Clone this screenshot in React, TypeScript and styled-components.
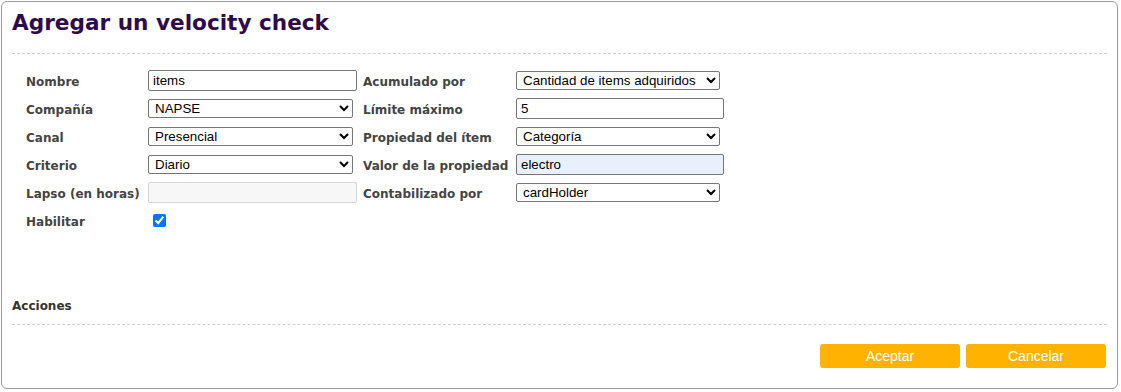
import React from "react";
import styled, { createGlobalStyle } from "styled-components";

const Global = createGlobalStyle`
  html, body { margin: 0; padding: 0; background: #fff; }
  body { font-family: "Liberation Sans", Arial, sans-serif; }
`;

const Panel = styled.div`
  margin: 1px 0 0 1px;
  width: 1117px;
  box-sizing: border-box;
  border: 1px solid #9a9a9a;
  border-radius: 6px;
  padding: 0 10px 20px 10px;
  background: #fff;
`;

const Header = styled.div`
  padding: 8px 0 17px;
  border-bottom: 1px dashed #cfcfcf;
`;

const Title = styled.h1`
  margin: 0;
  font-family: "DejaVu Sans", Verdana, sans-serif;
  font-weight: bold;
  font-size: 21.6px;
  line-height: 26px;
  color: #2e0b4a;
`;

const Form = styled.div`
  margin-top: 12px;
  padding-left: 14px;
  display: grid;
  grid-template-columns: 122px 215px 153px 1fr;
  grid-auto-rows: 28px;
  align-items: center;
`;

const Label = styled.label`
  font-family: "DejaVu Sans", Verdana, sans-serif;
  font-weight: bold;
  font-size: 12px;
  color: #444;
  padding-top: 3px;
  white-space: nowrap;
`;

const TextInput = styled.input<{ $w: number; $tint?: boolean }>`
  box-sizing: border-box;
  width: ${(p) => p.$w}px;
  height: 21px;
  margin: 0;
  padding: 1px 4px;
  font-family: "Liberation Sans", Arial, sans-serif;
  font-size: 13.33px;
  color: #000;
  border: 1px solid #767676;
  border-radius: 2px;
  background: ${(p) => (p.$tint ? "#e8f0fe" : "#fff")};
  &:disabled {
    background: #f7f7f7;
    border-color: #d6d6d6;
  }
`;

const Select = styled.select<{ $w: number }>`
  box-sizing: border-box;
  width: ${(p) => p.$w}px;
  height: 19px;
  margin: 0;
  padding: 0 0 0 2px;
  font-family: "Liberation Sans", Arial, sans-serif;
  font-size: 13.33px;
  color: #000;
  border: 1px solid #767676;
  border-radius: 2px;
  background: #fff;
`;

const Check = styled.input`
  margin: 0 0 0 5px;
  width: 13px;
  height: 13px;
  accent-color: #0075ff;
`;

const Section = styled.div`
  margin-top: 65px;
  padding-bottom: 10px;
  border-bottom: 1px dashed #cfcfcf;
  font-family: "DejaVu Sans", Verdana, sans-serif;
  font-weight: bold;
  font-size: 12px;
  line-height: 15px;
  color: #333;
`;

const Actions = styled.div`
  margin-top: 19px;
  display: flex;
  justify-content: flex-end;
  gap: 6px;
  padding-right: 1px;
`;

const Button = styled.button`
  width: 140px;
  height: 24px;
  border: none;
  border-radius: 3px;
  background: #ffb300;
  color: #fff;
  font-family: "Liberation Sans", Arial, sans-serif;
  font-size: 14px;
  cursor: pointer;
`;

const Empty = styled.span``;

export default function App() {
  return (
    <>
      <Global />
      <Panel>
        <Header>
          <Title>Agregar un velocity check</Title>
        </Header>
        <Form>
          <Label>Nombre</Label>
          <TextInput $w={209} defaultValue="items" />
          <Label>Acumulado por</Label>
          <Select $w={204} defaultValue="a">
            <option value="a">Cantidad de items adquiridos</option>
          </Select>

          <Label>Compañía</Label>
          <Select $w={205} defaultValue="n">
            <option value="n">NAPSE</option>
          </Select>
          <Label>Límite máximo</Label>
          <TextInput $w={208} defaultValue="5" />

          <Label>Canal</Label>
          <Select $w={205} defaultValue="p">
            <option value="p">Presencial</option>
          </Select>
          <Label>Propiedad del ítem</Label>
          <Select $w={204} defaultValue="c">
            <option value="c">Categoría</option>
          </Select>

          <Label>Criterio</Label>
          <Select $w={205} defaultValue="d">
            <option value="d">Diario</option>
          </Select>
          <Label>Valor de la propiedad</Label>
          <TextInput $w={208} $tint defaultValue="electro" />

          <Label>Lapso (en horas)</Label>
          <TextInput $w={209} disabled />
          <Label>Contabilizado por</Label>
          <Select $w={204} defaultValue="h">
            <option value="h">cardHolder</option>
          </Select>

          <Label>Habilitar</Label>
          <Check type="checkbox" defaultChecked />
          <Empty />
          <Empty />
        </Form>
        <Section>Acciones</Section>
        <Actions>
          <Button>Aceptar</Button>
          <Button>Cancelar</Button>
        </Actions>
      </Panel>
    </>
  );
}
